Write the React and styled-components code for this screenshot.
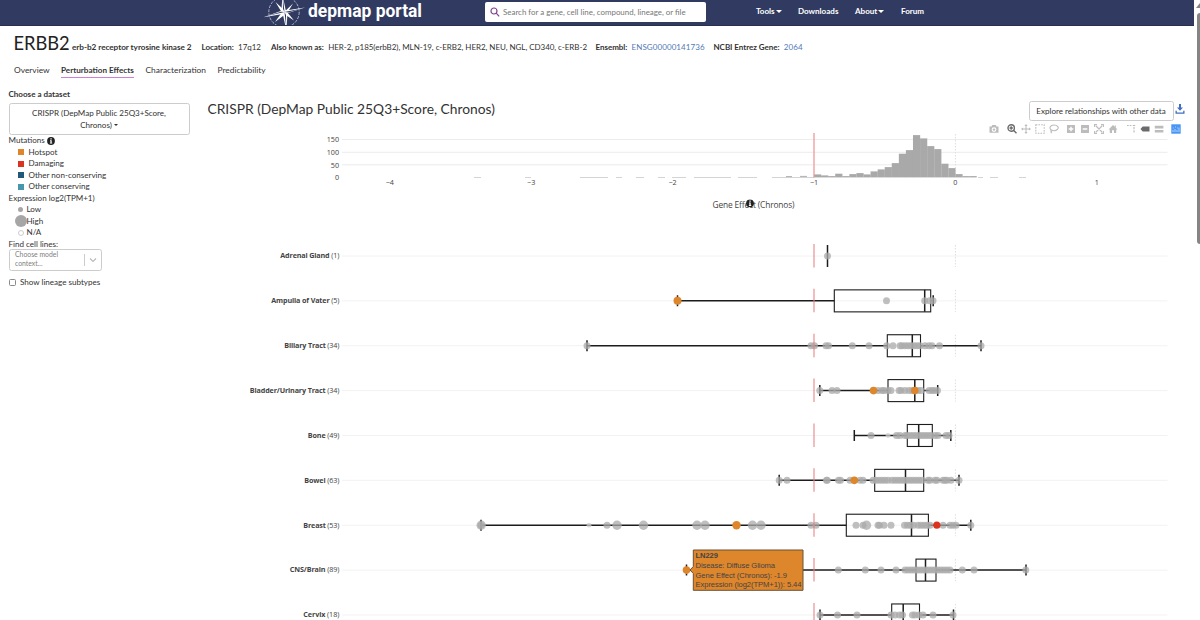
import React from "react";
import styled, { createGlobalStyle } from "styled-components";

const GlobalStyle = createGlobalStyle`
    * {
        box-sizing: border-box;
    }
    body {
        margin: 0;
        background: #fff;
        color: #333;
        font-family: Lato, "Liberation Sans", sans-serif;
        font-size: 8.05px;
        overflow: hidden;
    }
`

const Page = styled.div`
    display: flex;
    width: 1200px;
    height: 620px;
    overflow: hidden;
`

const Content = styled.div`
    width: 1193.5px;
    flex: none;
`

const Scrollbar = styled.div`
    flex: 1;
    display: flex;
    flex-direction: column;
    align-items: flex-end;
    padding-top: 3px;
    overflow: hidden;
    svg {
        flex: none;
        margin-bottom: 5px;
    }
`

const Thumb = styled.div`
    width: 3.5px;
    height: 231px;
    border-radius: 3px 0 0 3px;
    background: #858585;
`

const Header = styled.header`
    display: flex;
    height: 25.5px;
    padding-left: 263px;
    background: #313b61;
    border-bottom: 1px solid #283050;
`

const Wordmark = styled.svg`
    overflow: visible;
    font-family: Roboto, sans-serif;
    font-size: 18.6px;
    font-weight: 700;
    fill: #fff;
`

const Search = styled.div`
    display: flex;
    align-items: center;
    width: 221px;
    height: 20.5px;
    margin: 1.5px 0 0 60px;
    padding-left: 5px;
    border-radius: 2px;
    background: #fff;
    color: #777;
    font-size: 7.93px;
    white-space: nowrap;
    svg {
        margin-right: 3px;
    }
`

const Menu = styled.nav`
    display: grid;
    grid-template-columns: 42px 57px 46px 40px;
    margin-left: 50px;
    height: 22.5px;
    align-items: center;
    color: #fff;
    font-weight: 700;
`

const MenuItem = styled.div`
    display: flex;
    align-items: center;
    gap: 1px;
`

const Caret = styled.span`
    border: ${props => props.$size || 3}px solid transparent;
    border-top-color: currentColor;
    border-bottom: 0;
`

const Gene = styled.div`
    display: grid;
    grid-template-columns: 58.5px 129.5px 69.5px 324.5px 118px 100px;
    align-items: baseline;
    height: 35px;
    padding: 6px 0 0 13.5px;
    white-space: nowrap;
    font-size: 8px;
    letter-spacing: -0.04px;
    h1 {
        margin: 0;
        font-size: 18.3px;
        line-height: 23px;
        font-weight: 400;
        color: #222;
    }
    a {
        color: #5379b5;
        letter-spacing: 0.07px;
    }
`

const GeneName = styled.b`
    font-size: 8.2px;
`

const Fact = styled.div`
    b {
        margin-right: 2.3px;
        letter-spacing: -0.04px;
    }
`

const Tabs = styled.div`
    display: grid;
    grid-template-columns: 47px 84.5px 72px 60px;
    padding: 4px 0 0 14px;
    height: 28px;
    font-size: 8.4px;
`

const Tab = styled.div`
    justify-self: start;
    height: 13px;
    line-height: 11px;
    white-space: nowrap;
    font-size: ${props => props.$active ? 8.15 : 8.4}px;
    font-weight: ${props => props.$active ? 700 : 400};
    border-bottom: ${props => props.$active ? "1px solid #cf7fd6" : "0"};
`

const Body = styled.div`
    display: flex;
`

const Sidebar = styled.aside`
    width: 200px;
    padding-left: 8.5px;
    line-height: 11.5px;
`

const DatasetButton = styled.div`
    width: 181px;
    height: 31.5px;
    margin: 3px 0 0.5px;
    padding-top: 4px;
    text-align: center;
    border: 1px solid #ccc;
    border-radius: 2.5px;
    ${Caret} {
        display: inline-block;
        vertical-align: middle;
        margin-left: 2px;
    }
`

const Heading = styled.div`
    display: flex;
    align-items: center;
    gap: 2px;
    height: 11.5px;
    font-weight: ${props => props.$bold ? 700 : 400};
`

const LegendRow = styled.div`
    display: flex;
    align-items: center;
    height: 11.5px;
    padding-left: 6px;
`

const Marker = styled.div`
    display: flex;
    justify-content: center;
    width: 12px;
    margin-right: ${props => props.$gap || 0}px;
`

const Swatch = styled.span`
    width: 6px;
    height: 6px;
    background: ${props => props.$color};
`

const Dot = styled.span`
    flex: none;
    width: ${props => props.$size}px;
    height: ${props => props.$size}px;
    border-radius: 50%;
    background: ${props => props.$hollow ? "#fff" : "#a6a6a6"};
    border: ${props => props.$hollow ? "1px solid #ccc" : "0"};
`

const Select = styled.div`
    display: flex;
    align-items: center;
    width: 93px;
    height: 22px;
    margin-top: -0.8px;
    padding-left: 5.5px;
    border: 1px solid #ccc;
    border-radius: 2.5px;
    color: #808080;
    font-size: 6.85px;
    line-height: 9px;
    span {
        width: 69px;
        height: 20px;
    }
    i {
        width: 1px;
        height: 12px;
        background: #ccc;
        margin-right: 4px;
    }
`

const CheckRow = styled.label`
    display: flex;
    align-items: center;
    margin-top: 5.8px;
`

const Checkbox = styled.span`
    width: 7px;
    height: 7px;
    margin-right: 4.5px;
    border: 1px solid #8a8a8a;
    border-radius: 1.5px;
`

const Main = styled.main`
    flex: 1;
    padding-top: 11px;
`

const TitleBar = styled.div`
    display: flex;
    height: 24px;
    padding-left: 7.5px;
    h2 {
        flex: 1;
        margin: 0;
        font-size: 13.8px;
        line-height: 18px;
        font-weight: 400;
        white-space: nowrap;
    }
    svg {
        margin: 4px 9px 0 1px;
    }
`

const ExploreButton = styled.div`
    width: 145px;
    height: 20px;
    margin-top: 1.5px;
    line-height: 18px;
    text-align: center;
    border: 1px solid #ccc;
    border-radius: 2.5px;
    white-space: nowrap;
`

const ModeBar = styled.div`
    display: flex;
    justify-content: flex-end;
    height: 10px;
    padding-right: 10.2px;
`

const ModeGroup = styled.div`
    display: flex;
    margin-left: 3.6px;
    svg {
        width: 10px;
        height: 10px;
        margin: 0 2px;
    }
`

const Plot = styled.svg`
    display: block;
    margin-top: -2px;
    font-family: "Open Sans", sans-serif;
    font-size: 7.2px;
    fill: #444;
`

const GREY = "#bcbcbc";
const DARK = "#6b6b6b";
const ORANGE = "#de862c";
const RED = "#dc3220";

// zero of the axis and pixels per unit of gene effect
const ZERO = 955.4;
const UNIT = 141.4;

const bars = [3, 2, 1.3, 3.7, 1.3, 3.3, 4.3, 3, 6, 8, 10.3, 14.3, 23.7, 27.3, 42.3, 39, 31.3, 28.3, 13.7, 9.3, 3.3, 1.3, 1.3];
const dashes = [[474, 481], [525, 531], [580, 608], [616, 622], [636, 644], [658, 665], [672, 686], [694, 731], [738, 757], [772, 814], [978, 983], [990, 998], [1019, 1026]];

const range = (from, to, step = 3) => {
    const out = [];
    for (let x = from; x <= to; x += step) out.push(x);
    return out;
};

const rows = [
    { name: "Adrenal Gland", n: 1, width: 59, flat: true, box: [827.5, 827.5, 827.5, 827.5, 827.5], dots: [827.5] },
    { name: "Ampulla of Vater", n: 5, width: 68, box: [677.5, 834.3, 924.7, 930.7, 933.2], dots: [886.5, 924.7, 929.5, 933], marks: [[677.5, ORANGE, 4]] },
    { name: "Biliary Tract", n: 34, width: 55, box: [587, 887.3, 912.3, 920.5, 981], dots: [587, 811, 814.5, 826, 828.5, 852.3, 869, 886.7, 893, 900, 902, 905, 908, 911, 914, 917, 920, 925, 929, 932, 939.5, 981] },
    { name: "Bladder/Urinary Tract", n: 34, width: 89.5, box: [819.8, 888, 914.8, 923.7, 937.7], dots: [819.8, 832, 837, 878, 882, 884, 888, 891, 899, 901, 905, 909, 912, 918, 921, 929, 932, 934, 937.5], marks: [[873.5, ORANGE, 3.8], [914.8, ORANGE, 3.8]] },
    { name: "Bone", n: 49, width: 31.5, box: [854.3, 907.3, 918.7, 932.3, 950.8], dots: [871, 896.5, 900, 905, ...range(907, 932), 935, 938, 946, 949], small: [888] },
    { name: "Bowel", n: 63, width: 35, box: [779.2, 874.7, 905.5, 923.7, 959], dots: [779.2, 787, 826.5, 827.2, 838.5, 840.5, 850, 860, 863, 873, ...range(876, 888), ...range(892, 901), ...range(904, 922), 928, 930, 935, 937, 943, 945, 947, 951, 959], marks: [[854.3, ORANGE, 3.8]] },
    { name: "Breast", n: 53, width: 36, box: [481, 846.3, 911.5, 928.4, 970.8], dots: [481, 607, 811, 816, 856, 863, 878, 879.5, 884, 891, ...range(904.5, 914), 918, ...range(921, 931), 943, 950, 953, 956, 970.8], big: [481.2, 617, 643.5, 697, 705, 752.5, 761, 866.5], small: [589], marks: [[736.5, ORANGE, 4.2], [936.8, RED, 3.6]] },
    { name: "CNS/Brain", n: 89, width: 49.5, box: [686.5, 916, 925.5, 936, 1026], dots: [838.3, 865.3, 881, 896, ...range(905, 952), 962.3, 974, 1025.8], marks: [[686.5, ORANGE, 3.8]] },
    { name: "Cervix", n: 18, width: 36, box: [820, 891.7, 903.2, 919.5, 953.5], dots: [820, 837.5, 857, 891, 895, 899.5, 902.5, 912.5, 915, 919, 923, 933, 953] },
];

const Compass = () => (
    <svg width="43" height="25" viewBox="0 0 43 25">
        <circle cx="21" cy="12" r="15.2" fill="none" stroke="#aeb3cb" strokeWidth="1" strokeDasharray="3 1.3" />
        <g fill="#fff">
            <path d="M19.5-5 L22.8 10.4 L42 7.5 L24.4 13.3 L23.5 31 L19.8 14 L0.5 17.2 L18.4 10.8z" />
            <path d="M12.5 2 L20 9 L23 10.2 L30 3.5 L24.5 12.5 L31 20.5 L22 14.5 L12 22 L18.8 12.5z" />
        </g>
        <path d="M21.5 12L19.8-3 20 9zM21.5 12L40 8.2 25.5 12.5zM21.5 12L23.2 27 23 15zM21.5 12L2 16.5 18 11.7z" fill="#313b61" />
    </svg>
);

const Info = () => (
    <svg width="8" height="8" viewBox="0 0 8 8">
        <circle cx="4" cy="4" r="3.9" fill="#222" />
        <path d="M3.4 1.3h1.3v1.1H3.4zM3 3.2h1.7v2.6h.5v.8H2.9v-.8h.5V4H3z" fill="#fff" />
    </svg>
);

const Icon = ({ children, color = GREY, line }) => (
    <svg viewBox="0 0 10 10" fill={line ? "none" : color} stroke={line ? color : "none"} strokeWidth="1.1">
        {children}
    </svg>
);

const PlotModeBar = () => (
    <ModeBar>
        <ModeGroup>
            <Icon>
                <path fillRule="evenodd" d="M.5 2.5h2L3.3 1h3.4l.8 1.5h2v6.3h-9zM5 3.2a2.4 2.4 0 100 4.8 2.4 2.4 0 000-4.8z" />
                <circle cx="5" cy="5.6" r="1.2" />
            </Icon>
        </ModeGroup>
        <ModeGroup>
            <Icon line color={DARK}>
                <circle cx="4.2" cy="4" r="3.2" strokeWidth="1.4" />
                <path d="M4.2 2.3v3.4M2.5 4h3.4M6.5 6.3L9.5 9.3" strokeWidth="1.4" />
            </Icon>
            <Icon>
                <path d="M5 0l1.6 2H5.5v2.5H8V3.4L10 5 8 6.6V5.5H5.5V8h1.1L5 10 3.4 8h1.1V5.5H2v1.1L0 5l2-1.6v1.1h2.5V2H3.4z" />
            </Icon>
            <Icon line><rect x=".8" y=".8" width="8.4" height="8.4" strokeDasharray="1.6 1.1" /></Icon>
            <Icon line>
                <path d="M2.3 6C-.2 4.2 1.2 1 5 1s5.3 2.8 3.3 4.5C6.7 7 4 6.8 2.5 6.1 1.2 6.5 2 8 3.2 7.8M2.2 7.5v1.8" />
            </Icon>
        </ModeGroup>
        <ModeGroup>
            <Icon><path fillRule="evenodd" d="M1 1h8v8H1zM4.3 2.7v1.6H2.7v1.4h1.6v1.6h1.4V5.7h1.6V4.3H5.7V2.7z" /></Icon>
            <Icon><path fillRule="evenodd" d="M1 1h8v8H1zM2.7 4.3v1.4h4.6V4.3z" /></Icon>
            <Icon line><path d="M.6 3V.6H3M7 .6h2.4V3M9.4 7v2.4H7M3 9.4H.6V7M2 2l6 6M8 2L2 8" /></Icon>
            <Icon><path d="M5 1l1.8 1.7V1.5h1v2.2L9.5 5.4H8.2V9H6V6.3H4V9H1.8V5.4H.5z" /></Icon>
        </ModeGroup>
        <ModeGroup>
            <Icon line><path d="M1 1.5h5" strokeDasharray="1.7 1" /><path d="M8 3v6" strokeDasharray="2.3 1" /><path d="M6.8 1.5h2.4" /></Icon>
            <Icon color={DARK}><path d="M.5 5l2.2-2.5h6.8v5H2.7z" /></Icon>
            <Icon><path d="M.8 1.8h8.6v2.7H.8zM.8 5.9h8.6v2.7H.8z" /></Icon>
        </ModeGroup>
        <ModeGroup>
            <Icon color="#4a94f5">
                <rect x=".3" y=".3" width="9.4" height="9.4" />
                <path d="M2 8V6M4 8V5M6 8V6M8 8V3.5" stroke="#b9d9ff" strokeWidth=".9" />
                <path d="M1.8 4h1M4 3h1M6 4h1" stroke="#b9d9ff" strokeWidth=".8" />
            </Icon>
        </ModeGroup>
    </ModeBar>
);

const Histogram = () => (
    <g>
        {[[150, 139.5], [100, 152.3], [50, 164.8], [0, 177.4]].map(([label, y]) => (
            <g key={label}>
                {label > 0 && <path d={`M342 ${y}H1167.5`} stroke="#ececec" />}
                <text x="339" y={y + 2.9} textAnchor="end">{label}</text>
            </g>
        ))}
        <path d={`M${ZERO} 134V177`} stroke="#dedede" strokeDasharray="1.5 1.5" />
        {bars.map((h, i) => (
            <rect key={i} x={814 + i * 7.07} y={177.4 - h} width="7.2" height={h} fill="#a9a9a9" />
        ))}
        {dashes.map(([a, b]) => <path key={a} d={`M${a} 177.5H${b}`} stroke="#d4d4d4" />)}
        <path d="M786 176.6h6M800 176.4h7" stroke="#b0b0b0" />
        <path d="M814 133V177.5" stroke="#ee9a9a" strokeWidth="1.3" />
        {[-4, -3, -2, -1, 0, 1].map(v => (
            <text key={v} x={ZERO + v * UNIT} y="185.3" textAnchor="middle">{String(v).replace("-", "−")}</text>
        ))}
        <text x="712.5" y="207.7" fontSize="8.4" textLength="82">Gene Effect (Chronos)</text>
        <svg x="746" y="199.3" width="8" height="8"><Info /></svg>
    </g>
);

const BoxRow = ({ row, y }) => {
    const [low, q1, median, q3, high] = row.box;
    return (
        <g>
            <path d={`M342 ${y}H1167.5`} stroke="#f2f2f2" />
            <path d={`M${ZERO} ${y - 11}V${y + 11}`} stroke="#dedede" strokeDasharray="1.5 1.5" />
            <text x="339.3" y={y + 2.4} textAnchor="end" textLength={row.width}>
                <tspan fontWeight="700">{row.name}</tspan> ({row.n})
            </text>
            <g fill="none" stroke="#1c1c1c" strokeWidth="1.5">
                {row.flat ? <path d={`M${low} ${y - 11}V${y + 11}`} /> : (
                    <>
                        <path d={`M${low} ${y}H${q1}M${q3} ${y}H${high}`} />
                        <path d={`M${low} ${y - 5.5}V${y + 5.5}M${high} ${y - 5.5}V${y + 5.5}M${median} ${y - 11}V${y + 11}`} />
                        <rect x={q1} y={y - 11} width={q3 - q1} height="22" strokeWidth="1.1" />
                    </>
                )}
            </g>
            <g fill="#a9a9a9" fillOpacity=".75">
                {row.dots.map((x, i) => <circle key={i} cx={x} cy={y} r="3.5" />)}
                {(row.big || []).map(x => <circle key={x} cx={x} cy={y} r="4.7" />)}
                {(row.small || []).map(x => <circle key={x} cx={x} cy={y} r="2.4" fill="#ccc" />)}
            </g>
            {(row.marks || []).map(([x, color, r]) => <circle key={x} cx={x} cy={y} r={r} fill={color} />)}
            <path d={`M814 ${y - 12}V${y + 11.5}`} stroke="#e88080" strokeWidth="1.3" strokeOpacity=".8" />
        </g>
    );
};

const HoverLabel = () => (
    <g fontFamily="Liberation Sans, Arial, sans-serif" fontSize="7.6">
        <path d="M690 570l3.3-3.5V550h109.7v40.3H693.3V573.5z" fill={ORANGE} stroke="#6a5033" strokeWidth="1" />
        <text x="695.5" y="558.2" fontWeight="700" textLength="22.5">LN229</text>
        <text x="695.5" y="567.8" textLength="79.5">Disease: Diffuse Glioma</text>
        <text x="695.5" y="577.6" textLength="91.5">Gene Effect (Chronos): -1.9</text>
        <text x="695.5" y="587.2" textLength="106">Expression (log2(TPM+1)): 5.44</text>
    </g>
);

const App = () => {
    return (
        <Page>
            <GlobalStyle />
            <Content>
                <Header>
                    <Compass />
                    <Wordmark width="119" height="25">
                        <text x="2" y="17.2" textLength="114" lengthAdjust="spacingAndGlyphs">depmap portal</text>
                    </Wordmark>
                    <Search>
                        <svg width="10" height="10" viewBox="0 0 10 10" fill="none" stroke="#80408f" strokeWidth="1.2">
                            <circle cx="4" cy="4" r="3" />
                            <path d="M6.2 6.2L9.2 9.4" />
                        </svg>
                        Search for a gene, cell line, compound, lineage, or file
                    </Search>
                    <Menu>
                        <MenuItem>Tools <Caret /></MenuItem>
                        <MenuItem>Downloads</MenuItem>
                        <MenuItem>About <Caret /></MenuItem>
                        <MenuItem>Forum</MenuItem>
                    </Menu>
                </Header>
                <Gene>
                    <h1>ERBB2</h1>
                    <GeneName>erb-b2 receptor tyrosine kinase 2</GeneName>
                    <Fact><b>Location:</b> 17q12</Fact>
                    <Fact><b>Also known as:</b> HER-2, p185(erbB2), MLN-19, c-ERB2, HER2, NEU, NGL, CD340, c-ERB-2</Fact>
                    <Fact><b>Ensembl:</b> <a>ENSG00000141736</a></Fact>
                    <Fact><b>NCBI Entrez Gene:</b> <a>2064</a></Fact>
                </Gene>
                <Tabs>
                    <Tab>Overview</Tab>
                    <Tab $active>Perturbation Effects</Tab>
                    <Tab>Characterization</Tab>
                    <Tab>Predictability</Tab>
                </Tabs>
                <Body>
                    <Sidebar>
                        <Heading $bold>Choose a dataset</Heading>
                        <DatasetButton>
                            CRISPR (DepMap Public 25Q3+Score,<br />Chronos)<Caret $size={2} />
                        </DatasetButton>
                        <Heading>Mutations <Info /></Heading>
                        <LegendRow><Marker $gap={2}><Swatch $color="#de862c" /></Marker>Hotspot</LegendRow>
                        <LegendRow><Marker $gap={2}><Swatch $color="#dc3220" /></Marker>Damaging</LegendRow>
                        <LegendRow><Marker $gap={2}><Swatch $color="#22577a" /></Marker>Other non-conserving</LegendRow>
                        <LegendRow><Marker $gap={2}><Swatch $color="#4896ab" /></Marker>Other conserving</LegendRow>
                        <Heading>Expression log2(TPM+1)</Heading>
                        <LegendRow><Marker><Dot $size={5} /></Marker>Low</LegendRow>
                        <LegendRow><Marker><Dot $size={12} /></Marker>High</LegendRow>
                        <LegendRow><Marker><Dot $size={6} $hollow /></Marker>N/A</LegendRow>
                        <Heading>Find cell lines:</Heading>
                        <Select>
                            <span>Choose model<br />context...</span>
                            <i />
                            <svg width="8" height="6" viewBox="0 0 8 6" fill="none" stroke="#bbb" strokeWidth="1.2"><path d="M1 1.5l3 3 3-3" /></svg>
                        </Select>
                        <CheckRow><Checkbox />Show lineage subtypes</CheckRow>
                    </Sidebar>
                    <Main>
                        <TitleBar>
                            <h2>CRISPR (DepMap Public 25Q3+Score, Chronos)</h2>
                            <ExploreButton>Explore relationships with other data</ExploreButton>
                            <svg width="10" height="10" viewBox="0 0 10 10" fill="#3f6fc0">
                                <path d="M4 0h2v3.5h2L5 6.7 2 3.5h2zM.5 6.8h1.3v1.6h6.4V6.8h1.3v2.9h-9z" />
                            </svg>
                        </TitleBar>
                        <PlotModeBar />
                        <Plot width="993" height="488" viewBox="200 132 993 488">
                            <Histogram />
                            {rows.map((row, i) => <BoxRow key={row.name} row={row} y={256 + i * 44.87} />)}
                            <HoverLabel />
                        </Plot>
                    </Main>
                </Body>
            </Content>
            <Scrollbar>
                <svg width="4" height="5" viewBox="0 0 4 5"><path d="M0 5L4 0v5z" fill="#858585" /></svg>
                <Thumb />
            </Scrollbar>
        </Page>
    )
}

export default App;
